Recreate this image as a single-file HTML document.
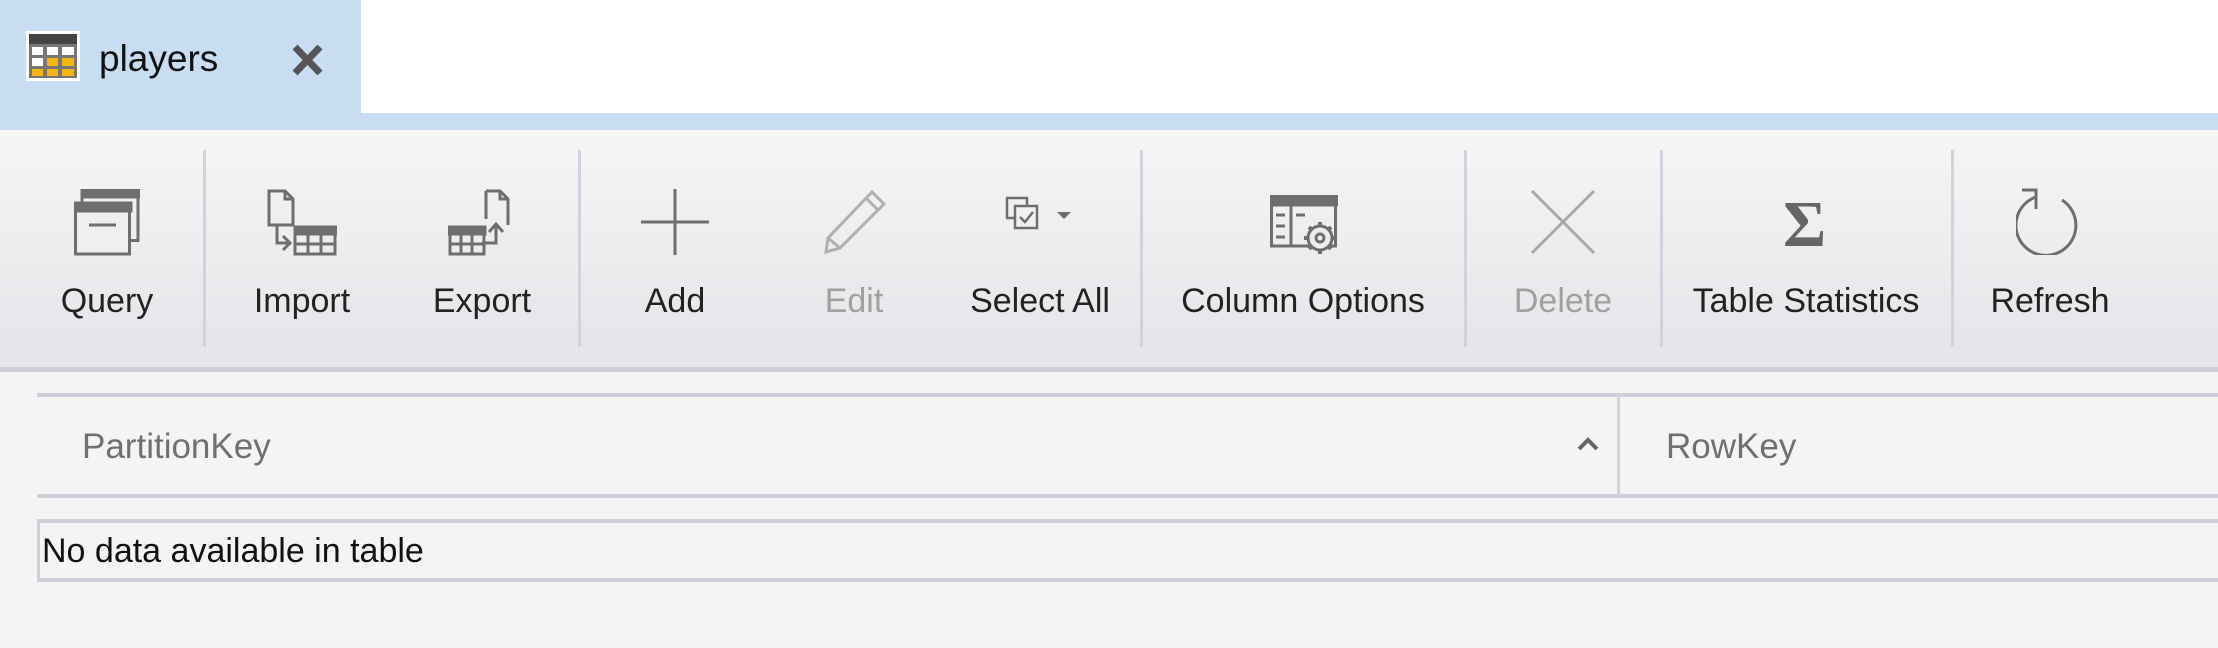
<!DOCTYPE html>
<html><head><meta charset="utf-8"><style>
*{margin:0;padding:0;box-sizing:border-box}
body{width:2218px;height:648px;overflow:hidden;background:#f4f4f4;font-family:"Segoe UI","Liberation Sans",sans-serif;position:relative}
.abs{position:absolute}
.lbl{position:absolute;top:282px;font-size:34px;color:#222;white-space:nowrap;transform:translateX(-50%)}
.dis{color:#a0a0a0}
.sep{position:absolute;top:150px;width:3px;height:197px;background:#d2d2de}
svg{position:absolute}
</style></head><body>
<div class="abs" style="left:0;top:0;width:2218px;height:115px;background:#fff"></div>
<div class="abs" style="left:0;top:0;width:361px;height:115px;background:#c8dcf2"></div>
<div class="abs" style="left:0;top:113px;width:2218px;height:17px;background:#c8dcf2"></div>
<svg style="left:26px;top:31px" width="54" height="50" viewBox="0 0 54 50">
<rect x="0" y="0" width="54" height="50" fill="#fff"/>
<rect x="3" y="3" width="48" height="44" fill="#777"/>
<rect x="3" y="3" width="48" height="10" fill="#444"/>
<g fill="#fff"><rect x="6" y="16" width="11" height="8"/><rect x="21" y="16" width="11" height="8"/><rect x="36" y="16" width="12" height="8"/><rect x="6" y="27" width="11" height="8"/></g>
<g fill="#f5b40f"><rect x="21" y="27" width="11" height="8"/><rect x="36" y="27" width="12" height="8"/><rect x="6" y="38" width="11" height="7"/><rect x="21" y="38" width="11" height="7"/><rect x="36" y="38" width="12" height="7"/></g>
</svg>
<div class="abs" style="left:99px;top:38px;font-size:37px;color:#111">players</div>
<svg style="left:291px;top:44px" width="33" height="32" viewBox="0 0 33 32"><path d="M4 3 L29 29 M29 3 L4 29" stroke="#555" stroke-width="7"/></svg>

<div class="abs" style="left:0;top:130px;width:2218px;height:237px;background:linear-gradient(#f6f6f6,#e4e4e9)"></div>
<div class="abs" style="left:0;top:367px;width:2218px;height:5px;background:#cfcfdc"></div>

<div class="sep" style="left:203px"></div>
<div class="sep" style="left:578px"></div>
<div class="sep" style="left:1140px"></div>
<div class="sep" style="left:1464px"></div>
<div class="sep" style="left:1660px"></div>
<div class="sep" style="left:1951px"></div>

<svg style="left:74px;top:189px" width="66" height="67" viewBox="0 0 66 67" fill="none" stroke="#6e6e6e" stroke-width="3">
<rect x="8" y="1.5" width="56" height="50"/><rect x="8" y="0" width="57" height="8" fill="#6e6e6e"/>
<rect x="1.5" y="16" width="54" height="49" fill="#efefef"/><rect x="0" y="14" width="57" height="8" fill="#6e6e6e"/>
<line x1="15" y1="36" x2="42" y2="36"/></svg>
<div class="lbl" style="left:107px">Query</div>
<svg style="left:267px;top:189px" width="70" height="67" viewBox="0 0 70 67" fill="none" stroke="#6e6e6e" stroke-width="3">
<path d="M2 2 H18 L26 10 V36 H2 Z M18 2 V10 H26"/><path d="M10 36 V54 H22 M16 47 L23 54 L16 61"/>
<rect x="28" y="39" width="40" height="26" fill="none"/><rect x="28" y="38" width="41" height="7" fill="#6e6e6e"/>
<path d="M41 45 V65 M54 45 V65 M28 55 H68"/></svg>
<div class="lbl" style="left:302px">Import</div>
<svg style="left:448px;top:189px" width="66" height="67" viewBox="0 0 66 67" fill="none" stroke="#6e6e6e" stroke-width="3">
<path d="M38 2 H52 L60 10 V36 M38 2 V30 M52 2 V10 H60"/><path d="M34 54 H48 V36 M41 43 L48 35 L55 43"/>
<rect x="2" y="40" width="34" height="25"/><rect x="1" y="38" width="36" height="7" fill="#6e6e6e"/>
<path d="M13 45 V65 M24 45 V65 M2 55 H36"/></svg>
<div class="lbl" style="left:482px">Export</div>
<svg style="left:641px;top:189px" width="68" height="67" viewBox="0 0 68 67"><path d="M34 0 V66 M0 33 H68" stroke="#6e6e6e" stroke-width="3"/></svg>
<div class="lbl" style="left:675px">Add</div>
<svg style="left:820px;top:188px" width="68" height="68" viewBox="0 0 68 68" fill="none" stroke="#b0b0b0" stroke-width="3">
<path d="M52 4 L64 16 L20 60 L6 64 L8 50 Z M46 10 L58 22 M8 50 L20 60"/></svg>
<div class="lbl dis" style="left:854px">Edit</div>
<svg style="left:1005px;top:196px" width="72" height="38" viewBox="0 0 72 38" fill="none" stroke="#6e6e6e" stroke-width="2.5">
<rect x="2" y="2" width="20" height="20"/><rect x="10" y="10" width="22" height="22" fill="#f0f0f0"/><path d="M15 21 L20 26 L28 16"/>
<path d="M52 16 H66 L59 23 Z" fill="#6e6e6e" stroke="none"/></svg>
<div class="lbl" style="left:1040px">Select All</div>
<svg style="left:1270px;top:195px" width="68" height="62" viewBox="0 0 68 62" fill="none" stroke="#6e6e6e" stroke-width="3">
<rect x="1.5" y="2" width="64" height="49"/><rect x="0" y="0" width="67" height="10" fill="#6e6e6e"/>
<path d="M21 10 V51 M6 20 H15 M6 31 H15 M6 42 H15 M26 20 H35"/>
<circle cx="50" cy="43" r="12" fill="#ececec"/><circle cx="50" cy="43" r="4"/>
<path d="M50 27 V31 M50 55 V59 M34 43 H38 M62 43 H66 M39 32 L42 35 M58 51 L61 54 M39 54 L42 51 M58 35 L61 32" stroke-width="4"/></svg>
<div class="lbl" style="left:1303px">Column Options</div>
<svg style="left:1530px;top:189px" width="66" height="66" viewBox="0 0 66 66"><path d="M2 2 L64 64 M64 2 L2 64" stroke="#a8a8a8" stroke-width="3"/></svg>
<div class="lbl dis" style="left:1563px">Delete</div>
<div class="abs" style="left:1783px;top:190px;font-family:'Liberation Serif',serif;font-size:66px;color:#666;font-weight:bold;line-height:70px">&Sigma;</div>
<div class="lbl" style="left:1806px">Table Statistics</div>
<svg style="left:2016px;top:187px" width="68" height="68" viewBox="0 0 68 68" fill="none" stroke="#6e6e6e" stroke-width="3">
<path d="M46 13 A30 30 0 1 1 20 10"/><path d="M6 3 H20 V22"/></svg>
<div class="lbl" style="left:2050px">Refresh</div>

<div class="abs" style="left:37px;top:393px;width:2181px;height:4px;background:#cfcfdc"></div>
<div class="abs" style="left:37px;top:494px;width:2181px;height:4px;background:#cfcfdc"></div>
<div class="abs" style="left:1617px;top:395px;width:3px;height:103px;background:#d2d2de"></div>
<div class="abs" style="left:82px;top:427px;font-size:35px;color:#707070">PartitionKey</div>
<svg style="left:1576px;top:436px" width="24" height="16" viewBox="0 0 24 16"><path d="M3 13 L12 4 L21 13" stroke="#666" stroke-width="4" fill="none"/></svg>
<div class="abs" style="left:1666px;top:427px;font-size:35px;color:#707070">RowKey</div>

<div class="abs" style="left:37px;top:519px;width:2181px;height:63px;border-top:4px solid #cfcfdc;border-bottom:4px solid #cfcfdc;border-left:3px solid #cfcfdc"></div>
<div class="abs" style="left:42px;top:532px;font-size:34px;color:#111">No data available in table</div>
</body></html>
